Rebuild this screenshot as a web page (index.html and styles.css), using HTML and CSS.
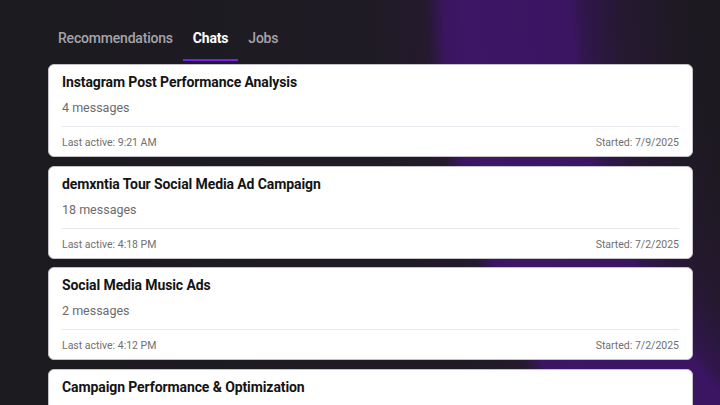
FILE: index.html
```html
<!DOCTYPE html>
<html lang="en">
<head>
<meta charset="utf-8">
<title>Chats</title>
<link rel="stylesheet" href="styles.css">
</head>
<body>
<div class="page">
  <nav class="tabs">
    <span class="tab">Recommendations</span>
    <span class="tab active">Chats</span>
    <span class="tab">Jobs</span>
  </nav>
  <div class="list">
    <div class="card">
      <div class="title">Instagram Post Performance Analysis</div>
      <div class="count">4 messages</div>
      <div class="meta"><span>Last active: 9:21 AM</span><span>Started: 7/9/2025</span></div>
    </div>
    <div class="card">
      <div class="title">demxntia Tour Social Media Ad Campaign</div>
      <div class="count">18 messages</div>
      <div class="meta"><span>Last active: 4:18 PM</span><span>Started: 7/2/2025</span></div>
    </div>
    <div class="card">
      <div class="title">Social Media Music Ads</div>
      <div class="count">2 messages</div>
      <div class="meta"><span>Last active: 4:12 PM</span><span>Started: 7/2/2025</span></div>
    </div>
    <div class="card">
      <div class="title">Campaign Performance &amp; Optimization</div>
    </div>
  </div>
</div>
</body>
</html>
```
FILE: styles.css
```css
html, body {
  margin: 0;
  height: 100%;
  overflow: hidden;
}
body {
  font-family: "Roboto", "Noto Sans", sans-serif;
  background-color: #1c1b1f;
  background-image:
    radial-gradient(circle at 1166px 0px,
      rgba(30, 26, 36, 0) 0px,
      rgba(30, 26, 36, 0) 470px,
      rgba(38, 24, 50, 0.9) 545px,
      rgba(50, 22, 80, 0.95) 585px,
      #3b1562 595px,
      #3d1666 700px,
      #3a1560 722px,
      rgba(36, 26, 46, 0.9) 740px,
      rgba(30, 26, 36, 0) 800px),
    linear-gradient(90deg, #1c1b1f 0%, #1f1b25 55%, #1c1a20 100%);
}
.page {
  padding: 26px 27px 0 48px;
}
.tabs {
  display: flex;
  height: 35px;
}
.tab {
  padding: 4px 10px 0;
  font-size: 14px;
  font-weight: 500;
  letter-spacing: -0.2px;
  color: #a6a4aa;
  border-bottom: 2px solid transparent;
  box-sizing: border-box;
}
.tab.active {
  color: #ffffff;
  font-weight: 700;
  border-bottom: 2px solid #7a1cf5;
}
.list {
  display: flex;
  flex-direction: column;
  gap: 8.7px;
  margin-top: 3px;
}
.card {
  background: #ffffff;
  border: 1px solid #c4c2c8;
  border-radius: 6px;
  padding: 8px 13px 0 13px;
  height: 93px;
  flex-shrink: 0;
  box-sizing: border-box;
}
.title {
  font-size: 14px;
  font-weight: 700;
  letter-spacing: -0.1px;
  color: #141414;
  line-height: 18px;
}
.count {
  font-size: 12.5px;
  color: #6b6b6b;
  margin-top: 9px;
  line-height: 16px;
}
.meta {
  display: flex;
  justify-content: space-between;
  border-top: 1px solid #e9e8ee;
  margin-top: 10px;
  padding-top: 9px;
  font-size: 10.5px;
  color: #6f6f6f;
  line-height: 14px;
}
```
